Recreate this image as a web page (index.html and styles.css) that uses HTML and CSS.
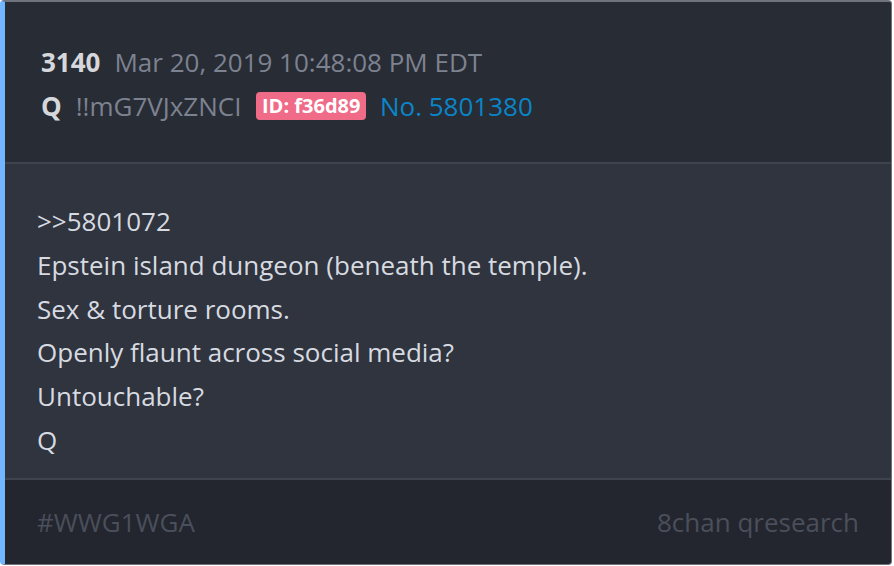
FILE: index.html
```html
<!DOCTYPE html>
<html>
<head>
<meta charset="utf-8">
<link rel="stylesheet" href="styles.css">
</head>
<body>
<article class="card">
  <header class="head">
    <div class="row"><span class="num">3140</span><span class="date">Mar 20, 2019 10:48:08 PM EDT</span></div>
    <div class="row"><span class="num">Q</span><span class="trip">!!mG7VJxZNCI</span><span class="badge">ID: f36d89</span><span class="postno">No. 5801380</span></div>
  </header>
  <section class="body">
    <p>&gt;&gt;5801072</p>
    <p>Epstein island dungeon (beneath the temple).</p>
    <p>Sex &amp; torture rooms.</p>
    <p>Openly flaunt across social media?</p>
    <p>Untouchable?</p>
    <p>Q</p>
  </section>
  <footer class="foot">
    <span>#WWG1WGA</span>
    <span>8chan qresearch</span>
  </footer>
</article>
</body>
</html>
```
FILE: styles.css
```css
html, body {
  margin: 0;
  padding: 0;
  background: #ffffff;
}
body {
  font-family: "Open Sans", "Noto Sans", sans-serif;
  font-size: 26px;
}
.card {
  width: 892px;
  height: 565px;
  box-sizing: border-box;
  border: 1px solid #6e737d;
  border-top-width: 2px;
  border-left: 5px solid #72b6ff;
  border-radius: 4px;
  display: flex;
  flex-direction: column;
  overflow: hidden;
  background: #23262e;
}
.head {
  background: #282c35;
  padding: 38px 36px 34px;
  border-bottom: 2px solid #3e434d;
}
.row {
  display: flex;
  align-items: center;
  height: 44px;
}
.num {
  font-weight: 700;
  color: #d5d7db;
  margin-right: 14px;
}
.date, .trip {
  color: #7d8290;
}
.trip { margin-right: 15px; }
.badge {
  background: #f06b88;
  color: #ffffff;
  font-weight: 700;
  font-size: 20px;
  line-height: 28px;
  padding: 0 5.5px;
  border-radius: 4px;
  margin-right: 14px;
}
.postno {
  color: #0a85c8;
}
.body {
  background: #2f343e;
  padding: 36px 32px 15px;
  border-bottom: 2px solid #3e434d;
}
.body p {
  margin: 0;
  line-height: 43.8px;
  color: #d7dae0;
}
.foot {
  flex: 1;
  display: flex;
  justify-content: space-between;
  align-items: center;
  padding: 0 32px;
  color: #4a4f5b;
}
```
